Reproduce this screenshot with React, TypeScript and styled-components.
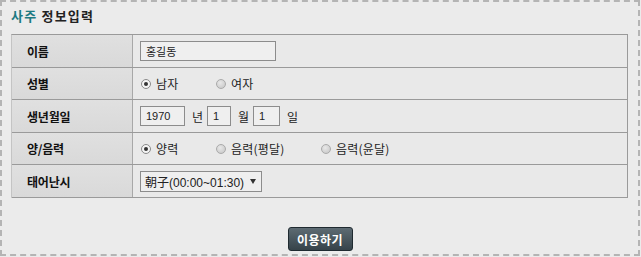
import React from "react";
import styled, { createGlobalStyle } from "styled-components";

const Global = createGlobalStyle`
  html, body { margin: 0; padding: 0; background: #ebebeb; }
  body { font-family: "Noto Sans CJK KR", "Liberation Sans", sans-serif; }
  * { box-sizing: border-box; }
`;

const Page = styled.div`
  width: 640px;
  height: 256px;
  border: 2px dashed #b4b4b4;
  background: #ebebeb;
  padding: 5px 9px 0 9px;
  display: flex;
  flex-direction: column;
`;

const Title = styled.h2`
  margin: 0;
  font-size: 13px;
  line-height: 18px;
  font-weight: bold;
  color: #222;
  letter-spacing: 1.2px;
  height: 27px;
`;

const Accent = styled.span`
  color: #1d7a82;
`;

const Table = styled.div`
  width: 617px;
  border-top: 1px solid #9a9a9a;
  border-left: 1px solid #c4c4c4;
  border-right: 1px solid #9a9a9a;
  display: flex;
  flex-direction: column;
`;

const Row = styled.div<{ $h: number }>`
  display: grid;
  grid-template-columns: 121px 1fr;
  height: ${(p) => p.$h + 1}px;
  border-bottom: 1px solid #9a9a9a;
`;

const Label = styled.div`
  background: linear-gradient(#e0e0e0, #d9d9d9);
  border-right: 1px solid #a8a8a8;
  display: flex;
  align-items: center;
  padding-left: 15px;
  font-size: 12px;
  font-weight: bold;
  color: #111;
  letter-spacing: -0.2px;
`;

const Value = styled.div`
  background: #e9e9e9;
  display: flex;
  align-items: center;
  padding-left: 7px;
  font-size: 12px;
  color: #222;
`;

const TextBox = styled.input<{ $w: number }>`
  width: ${(p) => p.$w}px;
  height: 20px;
  border: 1px solid #8c8c8c;
  background: #efefef;
  font-family: "Liberation Sans", "Noto Sans CJK KR", sans-serif;
  font-size: 11px;
  color: #222;
  padding: 0 5px;
  outline: none;
`;

const Unit = styled.span`
  margin: 0 4px 0 7px;
  font-size: 12px;
`;

const RadioSet = styled.div`
  display: grid;
  grid-template-columns: 75px 105px auto;
  align-items: center;
`;

const RadioGroup = styled.label`
  display: flex;
  align-items: center;
  font-size: 12px;
  color: #222;
  letter-spacing: 0.2px;
  white-space: nowrap;
`;

const RadioDot = styled.span<{ $on?: boolean }>`
  flex: none;
  width: 10px;
  height: 10px;
  border-radius: 50%;
  border: 1px solid ${(p) => (p.$on ? "#8a8a8a" : "#aaa")};
  background: ${(p) => (p.$on ? "#f4f4f4" : "radial-gradient(circle at 40% 35%, #e8e8e8, #c4c4c4)")};
  margin-left: 1px;
  margin-right: 5px;
  display: inline-flex;
  align-items: center;
  justify-content: center;
  &::after {
    content: "";
    width: 4px;
    height: 4px;
    border-radius: 50%;
    background: #333;
    display: ${(p) => (p.$on ? "block" : "none")};
  }
`;

const SelectBox = styled.div`
  width: 122px;
  height: 21px;
  border: 1px solid #8c8c8c;
  background: #efefef;
  display: flex;
  align-items: center;
  padding: 0 6px 0 4px;
  font-family: "Liberation Sans", "Noto Sans CJK KR", sans-serif;
  font-size: 12px;
  color: #222;
  white-space: nowrap;
  gap: 6px;
`;

const Caret = styled.span`
  flex: none;
  width: 0;
  height: 0;
  border-left: 3px solid transparent;
  border-right: 3px solid transparent;
  border-top: 5px solid #333;
`;

const ButtonBar = styled.div`
  display: flex;
  justify-content: center;
  padding-top: 29px;
`;

const Button = styled.button`
  width: 65px;
  height: 24px;
  border-radius: 3px;
  border: 1px solid #1f2a30;
  background: linear-gradient(#5d6b73, #36434a);
  color: #fff;
  font-family: "Noto Sans CJK KR", sans-serif;
  font-size: 12px;
  font-weight: bold;
  letter-spacing: 0.5px;
  padding: 0;
`;

export default function App() {
  return (
    <>
      <Global />
      <Page>
        <Title>
          <Accent>사주</Accent> 정보입력
        </Title>
        <Table>
          <Row $h={32}>
            <Label>이름</Label>
            <Value>
              <TextBox $w={136} defaultValue="홍길동" />
            </Value>
          </Row>
          <Row $h={31}>
            <Label>성별</Label>
            <Value>
              <RadioSet>
                <RadioGroup>
                  <RadioDot $on />
                  남자
                </RadioGroup>
                <RadioGroup>
                  <RadioDot />
                  여자
                </RadioGroup>
              </RadioSet>
            </Value>
          </Row>
          <Row $h={32}>
            <Label>생년월일</Label>
            <Value>
              <TextBox $w={45} defaultValue="1970" />
              <Unit>년</Unit>
              <TextBox $w={24} defaultValue="1" />
              <Unit>월</Unit>
              <TextBox $w={27} defaultValue="1" />
              <Unit>일</Unit>
            </Value>
          </Row>
          <Row $h={31}>
            <Label>양/음력</Label>
            <Value>
              <RadioSet>
                <RadioGroup>
                  <RadioDot $on />
                  양력
                </RadioGroup>
                <RadioGroup>
                  <RadioDot />
                  음력(평달)
                </RadioGroup>
                <RadioGroup>
                  <RadioDot />
                  음력(윤달)
                </RadioGroup>
              </RadioSet>
            </Value>
          </Row>
          <Row $h={32}>
            <Label>태어난시</Label>
            <Value>
              <SelectBox>
                朝子(00:00~01:30)
                <Caret />
              </SelectBox>
            </Value>
          </Row>
        </Table>
        <ButtonBar>
          <Button>이용하기</Button>
        </ButtonBar>
      </Page>
    </>
  );
}
